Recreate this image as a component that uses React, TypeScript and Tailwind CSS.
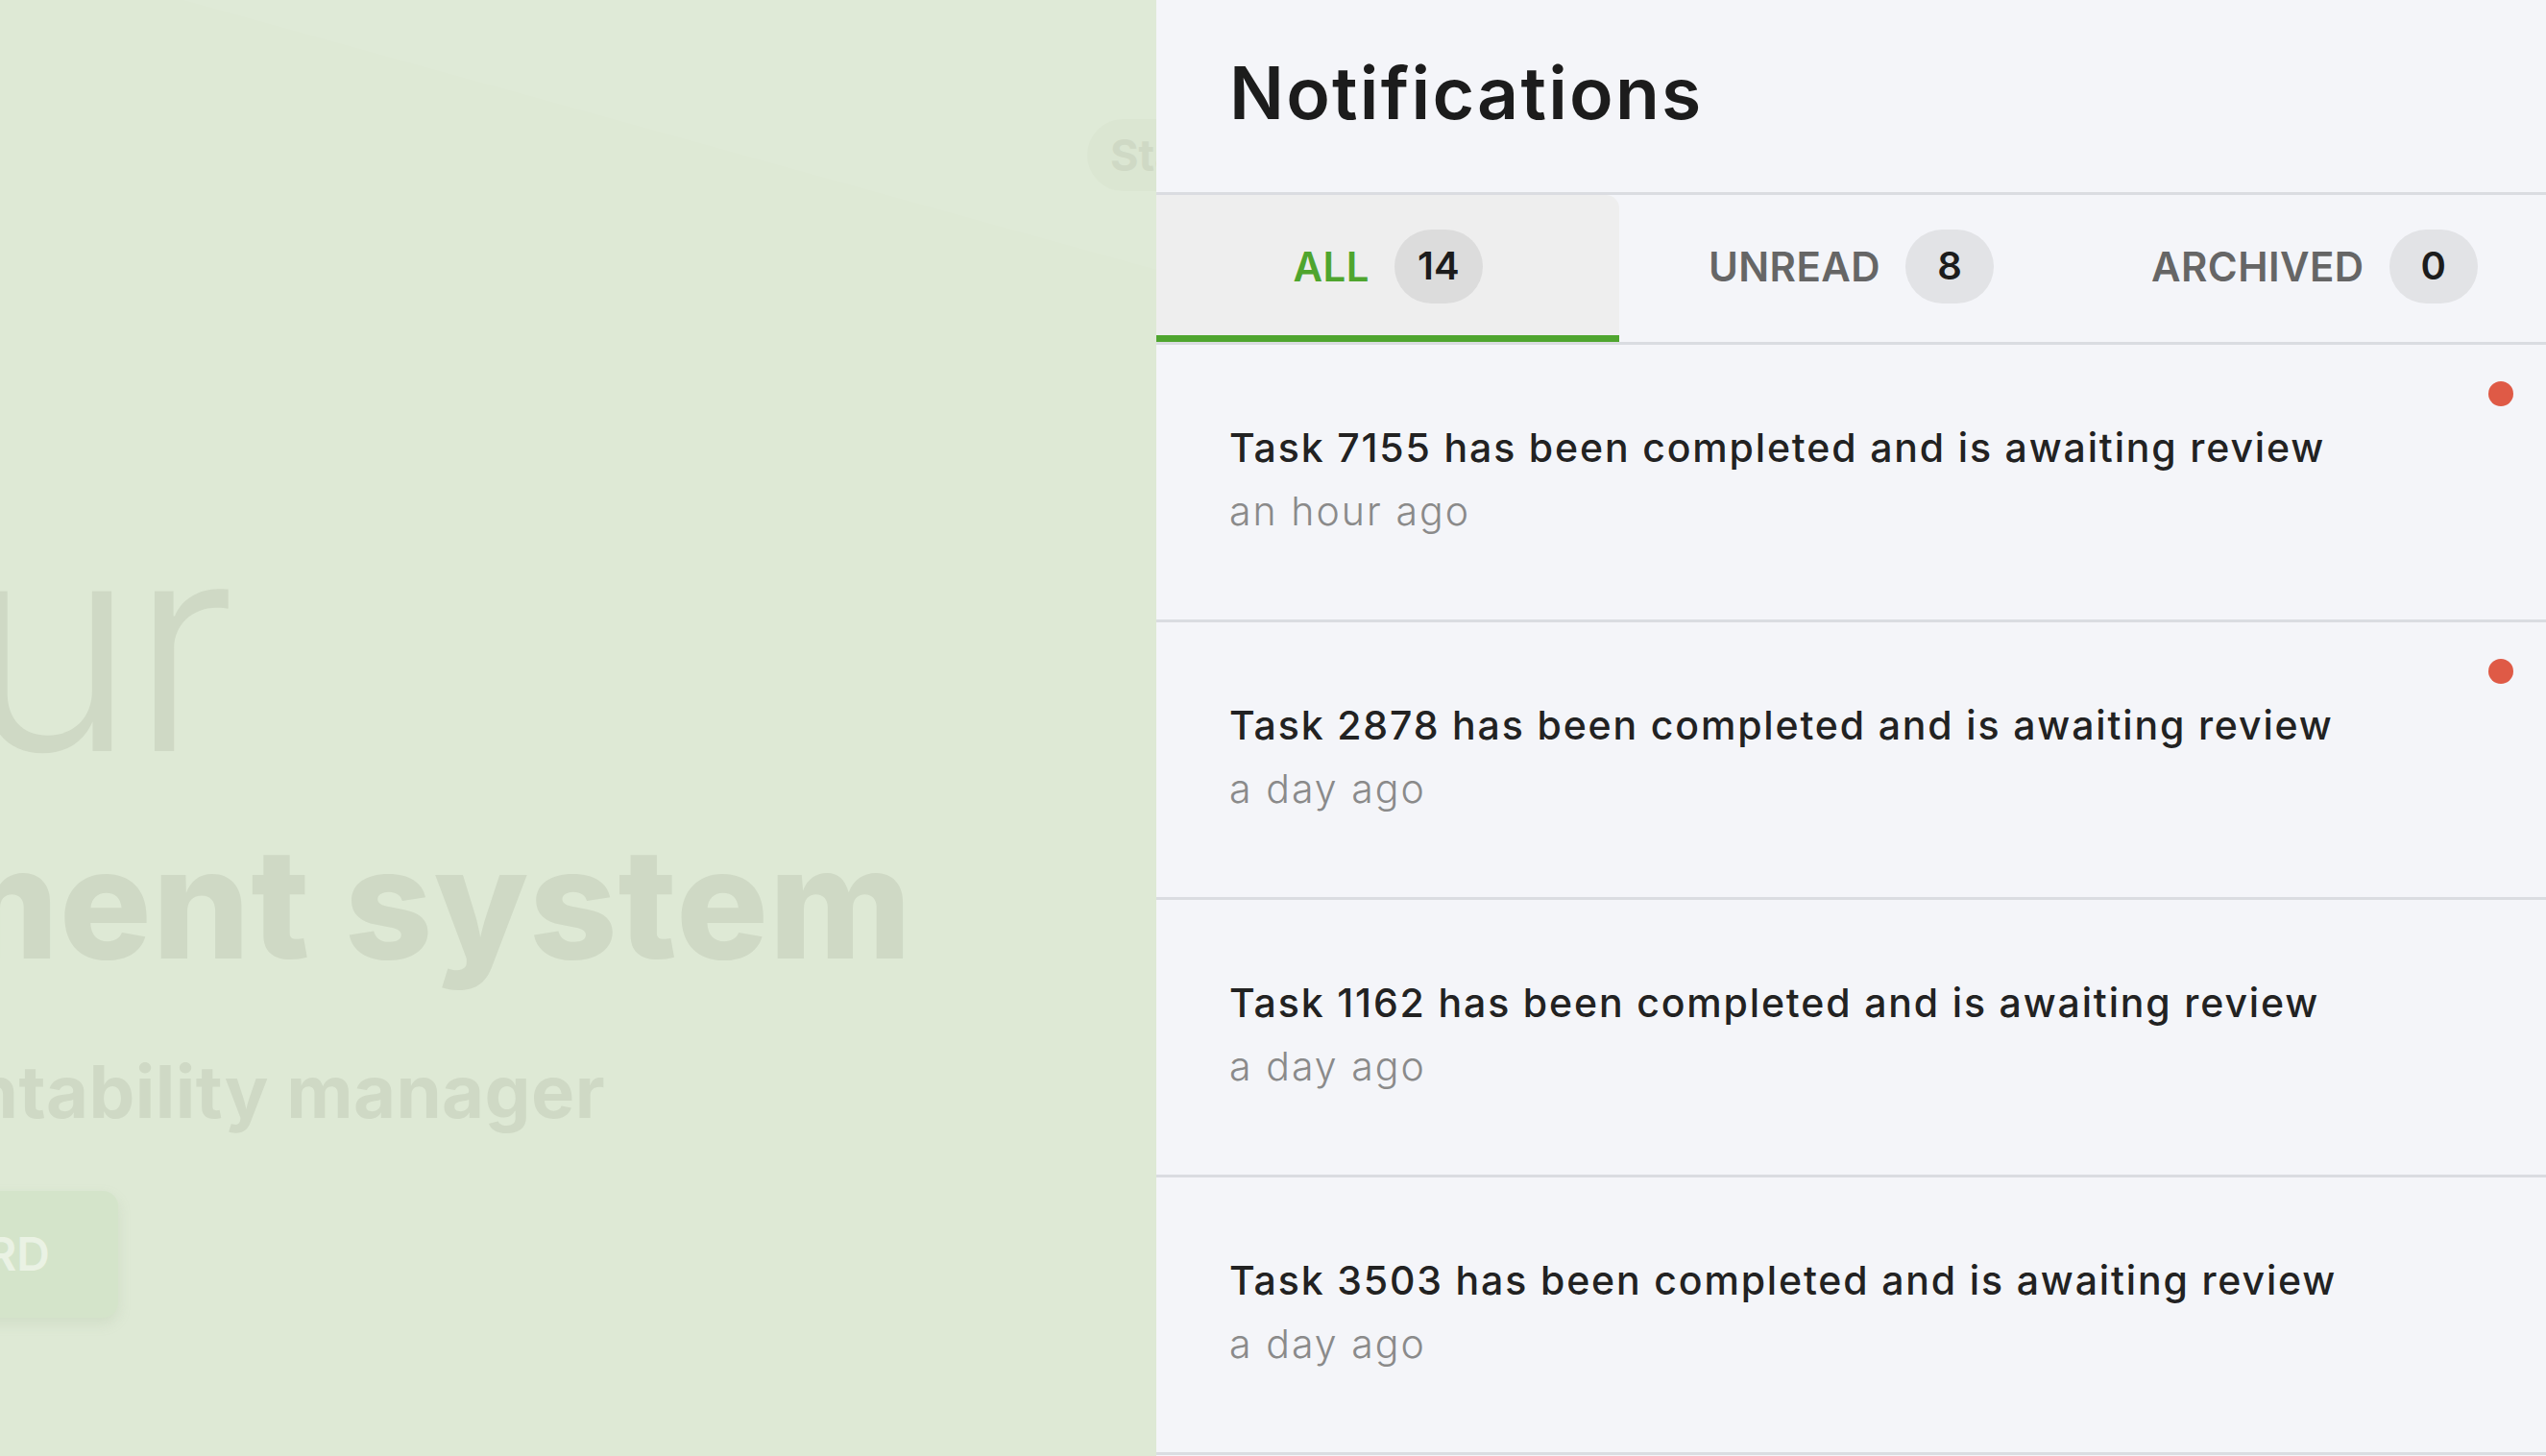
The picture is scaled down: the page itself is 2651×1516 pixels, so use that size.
import React from "react";

const font = { fontFamily: "Inter, 'Noto Sans', sans-serif" } as const;

const rows = [
  { id: 7155, time: "an hour ago", unread: true },
  { id: 2878, time: "a day ago", unread: true },
  { id: 1162, time: "a day ago", unread: false },
  { id: 3503, time: "a day ago", unread: false },
];

function Tab({ label, count, active }: { label: string; count: number; active?: boolean }) {
  return (
    <div
      className={
        "flex-1 flex items-center justify-center gap-[26px] h-[153px] border-b-[7px] pt-[2px] " +
        (active ? "bg-[#eeeeee] border-[#4fa52e] rounded-tr-[14px]" : "border-transparent")
      }
    >
      <span
        className={
          "text-[42px] font-semibold tracking-[0.01em] " + (active ? "text-[#4fa52e]" : "text-[#666666]")
        }
      >
        {label}
      </span>
      <span
        className={
          "flex items-center justify-center w-[92px] h-[77px] rounded-full text-[40px] font-semibold text-[#1c1c1c] " +
          (active ? "bg-[#dcdcdc]" : "bg-[#e2e3e6]")
        }
      >
        {count}
      </span>
    </div>
  );
}

export default function App() {
  return (
    <div className="flex w-[2651px] h-[1516px] overflow-hidden" style={font}>
      {/* Left dimmed background page */}
      <div className="relative w-[1204px] shrink-0 h-full bg-[#dee9d5] overflow-hidden">
        <svg className="absolute inset-0" width="1204" height="1516" viewBox="0 0 1204 1516">
          <polygon points="0,0 190,0 1204,281 1204,0" fill="#ffffff" opacity="0.05" />
        </svg>
        <div className="relative flex flex-col text-[#cfd9c5]">
          <div className="ml-[1132px] mt-[124px] h-[75px] w-[240px] rounded-full bg-[#dbe6d2] flex items-center pl-[24px]">
            <span className="text-[45px] font-bold leading-none text-[#cfd9c5] whitespace-nowrap">Start</span>
          </div>
          <div className="mt-[320px] w-[239px] flex justify-end">
            <span className="shrink-0 whitespace-nowrap text-[305px] font-light leading-none tracking-[-0.02em]">
              your
            </span>
          </div>
          <div className="mt-[36px] w-[950px] flex justify-end">
            <span className="shrink-0 whitespace-nowrap text-[160px] font-extrabold leading-none tracking-[0.005em]">
              management system
            </span>
          </div>
          <div className="mt-[78px] w-[630px] flex justify-end">
            <span className="shrink-0 whitespace-nowrap text-[76px] font-bold leading-none tracking-[0.005em]">
              accountability manager
            </span>
          </div>
          <div className="mt-[66px] w-[123px] flex justify-end">
            <div className="shrink-0 h-[132px] w-[400px] rounded-[16px] bg-[#d4e4ca] shadow-[0_6px_14px_rgba(150,170,140,0.18)] flex items-center justify-end pr-[71px]">
              <span className="text-[48px] font-semibold text-[#eaf2e4] leading-none whitespace-nowrap">
                DASHBOARD
              </span>
            </div>
          </div>
        </div>
      </div>

      {/* Notifications panel */}
      <div className="flex-1 h-full bg-[#f4f5f9] flex flex-col">
        <div className="h-[203px] shrink-0 pl-[76px] pt-[59px] border-b-[3px] border-[#dadce1]">
          <h1 className="text-[75px] font-semibold leading-none text-[#1c1c1c] tracking-[0.03em]">Notifications</h1>
        </div>
        <div className="flex border-b-[3px] border-[#dadce1]">
          <Tab label="ALL" count={14} active />
          <Tab label="UNREAD" count={8} />
          <Tab label="ARCHIVED" count={0} />
        </div>
        {rows.map((r) => (
          <div
            key={r.id}
            className="relative h-[289px] shrink-0 border-b-[3px] border-[#dadce1] flex flex-col justify-center pl-[76px] pb-[6px]"
          >
            <div className="text-[41px] font-medium leading-[66px] text-[#222222] tracking-[0.045em] whitespace-nowrap">
              Task {r.id} has been completed and is awaiting review
            </div>
            <div className="text-[41px] font-light leading-[66px] text-[#8a8a8a] tracking-[0.05em]">{r.time}</div>
            {r.unread && (
              <span className="absolute right-[34px] top-[38px] w-[26px] h-[26px] rounded-full bg-[#df5a46]" />
            )}
          </div>
        ))}
      </div>
    </div>
  );
}
